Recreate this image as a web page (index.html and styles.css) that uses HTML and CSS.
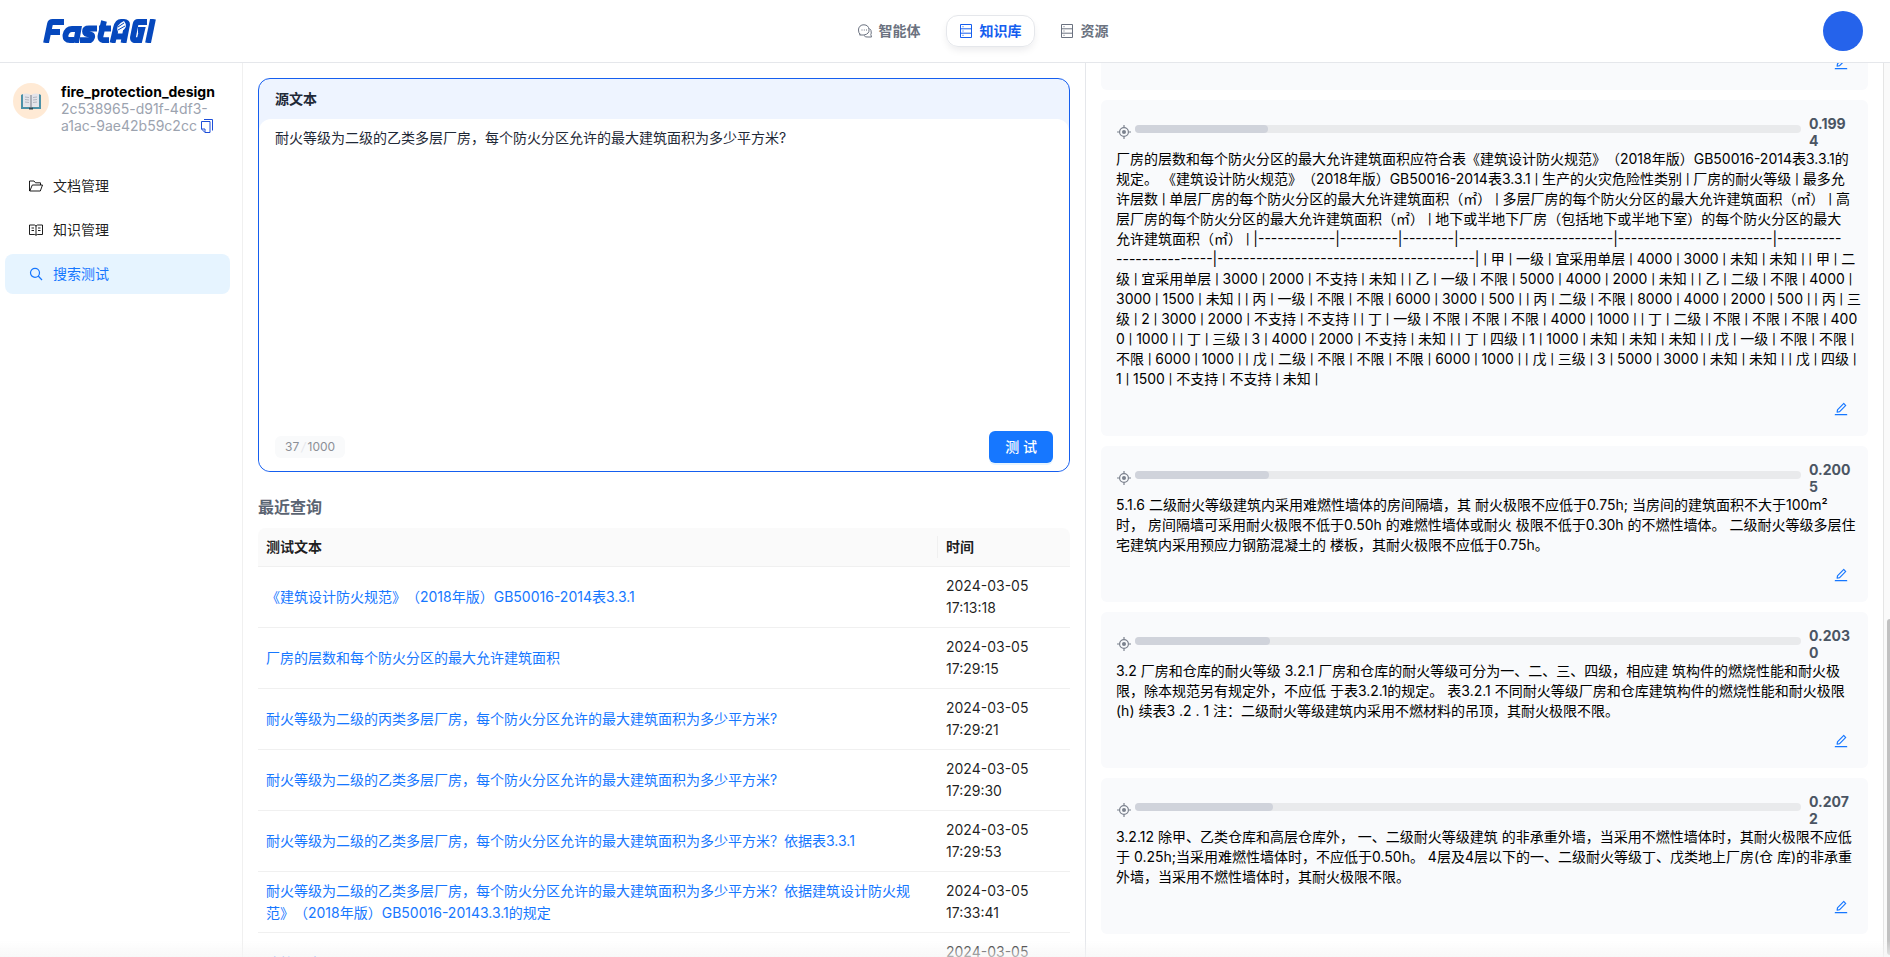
FILE: index.html
```html
<!DOCTYPE html>
<html lang="zh-CN">
<head>
<meta charset="utf-8">
<title>FastAGI 知识库</title>
<link rel="stylesheet" href="styles.css">
</head>
<body>
<svg class="defs" aria-hidden="true">
  <symbol id="edit" viewBox="0 0 1024 1024"><path d="M257.700 752c2 0 4-.2 6-.5L431.900 722c2-.4 3.900-1.300 5.300-2.800l423.900-423.900a9.960 9.960 0 000-14.100L694.900 114.900c-1.900-1.900-4.400-2.900-7.100-2.900s-5.200 1-7.100 2.900L256.800 538.800c-1.500 1.500-2.400 3.300-2.800 5.300l-29.500 168.200a33.500 33.500 0 009.400 29.800c6.600 6.400 14.900 9.900 23.800 9.900zm67.400-174.400L687.800 215l73.300 73.300-362.700 362.600-88.900 15.700 15.600-89zM880 836H144c-17.700 0-32 14.300-32 32v36c0 4.400 3.600 8 8 8h784c4.400 0 8-3.600 8-8v-36c0-17.700-14.300-32-32-32z"/></symbol>
  <symbol id="aim" viewBox="0 0 1024 1024"><circle cx="512" cy="512" r="282" fill="none" stroke="currentColor" stroke-width="76"/><circle cx="512" cy="512" r="130"/><path d="M474 64h76v160h-76zM474 800h76v160h-76zM64 474h160v76H64zM800 474h160v76H800z"/></symbol>
  <symbol id="rack" viewBox="0 0 14 16"><path d="M1.500 1.500h11v13h-11zM1.500 5.800h11M1.500 10.200h11M3.500 3.700h1M3.500 8h1M3.500 12.300h1" fill="none" stroke="currentColor"/></symbol>
</svg>

<header class="topbar">
  <a class="logo" href="#" aria-label="FastAGI">
    <svg viewBox="0 0 113 24" width="113" height="24" aria-hidden="true">
      <g fill="none" stroke="#0648bd" stroke-width="5.800">
        <path d="M3 24 7 5Q7.500 3 9.500 3H21M5 13H17"/>
        <path d="M33 24 35.500 10H29Q24 10 22.500 16 22 21 27 21H31"/>
        <path d="M54 9.500H46Q42 9.500 42 12.500T46 15.300 49 18.500 45 21.200H37"/>
        <path d="M61 2 57.500 17Q57 21.200 61 21.200H66M56 9.500H68"/>
        <path d="M69.500 24 73 9Q74.500 3 78 3H81Q84.500 3 84 6L80.500 24M71 17.500H81"/>
        <path d="M104 3H95Q93 3 92.500 5.500L90 18Q89.500 21.200 92 21.200H96.500L99 11H95"/>
        <path d="M110 0 105 24"/>
      </g>
      <path d="M75 13Q72 6 81 2 86 8 78 13Z" fill="#fff"/>
      <path d="M75 8 81 4M75 11 82 7" stroke="#0648bd"/>
    </svg>
  </a>
  <nav class="tabs">
    <a class="tab" href="#"><svg width="14" height="14" viewBox="0 0 14 14" fill="none" stroke="currentColor" aria-hidden="true"><path d="M2 10.300Q.5 8.700.5 6A5 5 0 0 1 6 .8Q10.500 1 11 5.500T6 11H1.500L2.500 9.800M11.500 4.500Q13.500 6 13.300 9L12.800 10.500 13.500 13H10Q7.500 13.500 6 11.500M3.500 6h1M5.800 6h1M8 6h1"/></svg>智能体</a>
    <a class="tab active" href="#"><svg width="14" height="16" aria-hidden="true"><use href="#rack"/></svg>知识库</a>
    <a class="tab" href="#"><svg width="14" height="16" aria-hidden="true"><use href="#rack"/></svg>资源</a>
  </nav>
  <button class="avatar" aria-label="用户菜单"></button>
</header>

<div class="page">
  <aside class="sidebar">
    <div class="dataset">
      <div class="book">
        <svg width="20" height="17" viewBox="0 0 20 17" aria-hidden="true"><path d="M0 2 2 1V14H18V1L20 2V16H0Z" fill="#4c91a8"/><path d="M2 1Q7-.5 10 2 13-.5 18 1V14Q13 12.500 10 15 7 12.500 2 14Z" fill="#e3e4ea"/><path d="M4 4 8 4.500M4 6.500 8 7M4 9 8 9.500M16 4 12 4.500M16 6.500 12 7M16 9 12 9.500" stroke="#b4b6bf"/><path d="M10 2V15" stroke="#777b84"/><path d="M8 14.500h4v2H8z" fill="#334b55"/></svg>
      </div>
      <div class="dataset-text">
        <h1>fire_protection_design</h1>
        <p>2c538965-d91f-4df3-<br>a1ac-9ae42b59c2cc <button class="copy" aria-label="复制"><svg width="12" height="14" viewBox="0 0 12 14" fill="none" stroke="currentColor" aria-hidden="true"><path d="M3 .5h8.500V11.500M.5 2.500h8.500v11H4L.5 10zM.5 10H4v3.500"/></svg></button></p>
      </div>
    </div>
    <nav class="menu">
      <a href="#"><svg width="14" height="14" viewBox="0 0 14 14" fill="none" stroke="currentColor" aria-hidden="true"><path d="M.5 12V2h4.500L6.500 3.800H11.500V6M.8 12 3.300 6H13.500L11.300 12Z"/></svg>文档管理</a>
      <a href="#"><svg width="14" height="14" viewBox="0 0 14 14" fill="none" stroke="currentColor" aria-hidden="true"><path d="M.5 2H5.500L7 3 8.500 2H13.500V11.500H8.500L7 12.300 5.500 11.500H.5ZM7 3V12M2.500 5H5M2.500 7.500H5M9 5H11.500M9 7.500H11.500"/></svg>知识管理</a>
      <a class="active" href="#"><svg width="14" height="14" viewBox="0 0 14 14" fill="none" stroke="currentColor" stroke-width="1.200" aria-hidden="true"><circle cx="6" cy="5.800" r="4.500"/><path d="M9.200 9 13 13"/></svg>搜索测试</a>
    </nav>
  </aside>

  <main class="query">
    <form class="source">
      <label class="source-title" for="source">源文本</label>
      <div class="source-body">
        <textarea id="source">耐火等级为二级的乙类多层厂房，每个防火分区允许的最大建筑面积为多少平方米?</textarea>
        <div class="source-foot">
          <span class="count">37<i>/</i>1000</span>
          <button class="primary" type="button">测 试</button>
        </div>
      </div>
    </form>
    <h2>最近查询</h2>
    <table class="recent">
      <thead><tr><th>测试文本</th><th class="time">时间</th></tr></thead>
      <tbody>
        <tr><td><a href="#">《建筑设计防火规范》（2018年版）GB50016-2014表3.3.1</a></td><td>2024-03-05 17:13:18</td></tr>
        <tr><td><a href="#">厂房的层数和每个防火分区的最大允许建筑面积</a></td><td>2024-03-05 17:29:15</td></tr>
        <tr><td><a href="#">耐火等级为二级的丙类多层厂房，每个防火分区允许的最大建筑面积为多少平方米?</a></td><td>2024-03-05 17:29:21</td></tr>
        <tr><td><a href="#">耐火等级为二级的乙类多层厂房，每个防火分区允许的最大建筑面积为多少平方米?</a></td><td>2024-03-05 17:29:30</td></tr>
        <tr><td><a href="#">耐火等级为二级的乙类多层厂房，每个防火分区允许的最大建筑面积为多少平方米？依据表3.3.1</a></td><td>2024-03-05 17:29:53</td></tr>
        <tr><td><a href="#">耐火等级为二级的乙类多层厂房，每个防火分区允许的最大建筑面积为多少平方米？依据建筑设计防火规范》（2018年版）GB50016-20143.3.1的规定</a></td><td>2024-03-05 17:33:41</td></tr>
        <tr><td><a href="#">建筑观点</a></td><td>2024-03-05 17:35:12</td></tr>
      </tbody>
    </table>
  </main>

  <section class="results">
    <article class="card previous">
      <button class="edit" aria-label="编辑"><svg width="16" height="16" aria-hidden="true"><use href="#edit"/></svg></button>
    </article>
    <article class="card">
      <div class="score"><svg width="16" height="16" aria-hidden="true"><use href="#aim"/></svg><div class="bar"><div class="fill" style="width:19.940%"></div></div><b>0.1994</b></div>
      <p>厂房的层数和每个防火分区的最大允许建筑面积应符合表《建筑设计防火规范》（2018年版）GB50016-2014表3.3.1的<br>规定。 《建筑设计防火规范》（2018年版）GB50016-2014表3.3.1 <i>|</i> 生产的火灾危险性类别 <i>|</i> 厂房的耐火等级 <i>|</i> 最多允<br>许层数 <i>|</i> 单层厂房的每个防火分区的最大允许建筑面积（㎡） <i>|</i> 多层厂房的每个防火分区的最大允许建筑面积（㎡） <i>|</i> 高<br>层厂房的每个防火分区的最大允许建筑面积（㎡） <i>|</i> 地下或半地下厂房（包括地下或半地下室）的每个防火分区的最大<br>允许建筑面积（㎡） <i>|</i> |------------|---------|--------|------------------------|------------------------|----------<br>---------------|----------------------------------------| <i>|</i> 甲 <i>|</i> 一级 <i>|</i> 宜采用单层 <i>|</i> 4000 <i>|</i> 3000 <i>|</i> 未知 <i>|</i> 未知 <i>|</i> <i>|</i> 甲 <i>|</i> 二<br>级 <i>|</i> 宜采用单层 <i>|</i> 3000 <i>|</i> 2000 <i>|</i> 不支持 <i>|</i> 未知 <i>|</i> <i>|</i> 乙 <i>|</i> 一级 <i>|</i> 不限 <i>|</i> 5000 <i>|</i> 4000 <i>|</i> 2000 <i>|</i> 未知 <i>|</i> <i>|</i> 乙 <i>|</i> 二级 <i>|</i> 不限 <i>|</i> 4000 <i>|</i><br>3000 <i>|</i> 1500 <i>|</i> 未知 <i>|</i> <i>|</i> 丙 <i>|</i> 一级 <i>|</i> 不限 <i>|</i> 不限 <i>|</i> 6000 <i>|</i> 3000 <i>|</i> 500 <i>|</i> <i>|</i> 丙 <i>|</i> 二级 <i>|</i> 不限 <i>|</i> 8000 <i>|</i> 4000 <i>|</i> 2000 <i>|</i> 500 <i>|</i> <i>|</i> 丙 <i>|</i> 三<br>级 <i>|</i> 2 <i>|</i> 3000 <i>|</i> 2000 <i>|</i> 不支持 <i>|</i> 不支持 <i>|</i> <i>|</i> 丁 <i>|</i> 一级 <i>|</i> 不限 <i>|</i> 不限 <i>|</i> 不限 <i>|</i> 4000 <i>|</i> 1000 <i>|</i> <i>|</i> 丁 <i>|</i> 二级 <i>|</i> 不限 <i>|</i> 不限 <i>|</i> 不限 <i>|</i> 400<br>0 <i>|</i> 1000 <i>|</i> <i>|</i> 丁 <i>|</i> 三级 <i>|</i> 3 <i>|</i> 4000 <i>|</i> 2000 <i>|</i> 不支持 <i>|</i> 未知 <i>|</i> <i>|</i> 丁 <i>|</i> 四级 <i>|</i> 1 <i>|</i> 1000 <i>|</i> 未知 <i>|</i> 未知 <i>|</i> 未知 <i>|</i> <i>|</i> 戊 <i>|</i> 一级 <i>|</i> 不限 <i>|</i> 不限 <i>|</i><br>不限 <i>|</i> 6000 <i>|</i> 1000 <i>|</i> <i>|</i> 戊 <i>|</i> 二级 <i>|</i> 不限 <i>|</i> 不限 <i>|</i> 不限 <i>|</i> 6000 <i>|</i> 1000 <i>|</i> <i>|</i> 戊 <i>|</i> 三级 <i>|</i> 3 <i>|</i> 5000 <i>|</i> 3000 <i>|</i> 未知 <i>|</i> 未知 <i>|</i> <i>|</i> 戊 <i>|</i> 四级 <i>|</i><br>1 <i>|</i> 1500 <i>|</i> 不支持 <i>|</i> 不支持 <i>|</i> 未知 <i>|</i></p>
      <button class="edit" aria-label="编辑"><svg width="16" height="16" aria-hidden="true"><use href="#edit"/></svg></button>
    </article>
    <article class="card">
      <div class="score"><svg width="16" height="16" aria-hidden="true"><use href="#aim"/></svg><div class="bar"><div class="fill" style="width:20.050%"></div></div><b>0.2005</b></div>
      <p>5.1.6 二级耐火等级建筑内采用难燃性墙体的房间隔墙，其 耐火极限不应低于0.75h; 当房间的建筑面积不大于100m²<br>时， 房间隔墙可采用耐火极限不低于0.50h 的难燃性墙体或耐火 极限不低于0.30h 的不燃性墙体。 二级耐火等级多层住<br>宅建筑内采用预应力钢筋混凝土的 楼板，其耐火极限不应低于0.75h。</p>
      <button class="edit" aria-label="编辑"><svg width="16" height="16" aria-hidden="true"><use href="#edit"/></svg></button>
    </article>
    <article class="card">
      <div class="score"><svg width="16" height="16" aria-hidden="true"><use href="#aim"/></svg><div class="bar"><div class="fill" style="width:20.300%"></div></div><b>0.2030</b></div>
      <p>3.2 厂房和仓库的耐火等级 3.2.1 厂房和仓库的耐火等级可分为一、二、三、四级，相应建 筑构件的燃烧性能和耐火极<br>限，除本规范另有规定外，不应低 于表3.2.1的规定。 表3.2.1 不同耐火等级厂房和仓库建筑构件的燃烧性能和耐火极限<br>(h) 续表3 .2 . 1 注：二级耐火等级建筑内采用不燃材料的吊顶，其耐火极限不限。</p>
      <button class="edit" aria-label="编辑"><svg width="16" height="16" aria-hidden="true"><use href="#edit"/></svg></button>
    </article>
    <article class="card">
      <div class="score"><svg width="16" height="16" aria-hidden="true"><use href="#aim"/></svg><div class="bar"><div class="fill" style="width:20.720%"></div></div><b>0.2072</b></div>
      <p>3.2.12 除甲、乙类仓库和高层仓库外， 一、二级耐火等级建筑 的非承重外墙，当采用不燃性墙体时，其耐火极限不应低<br>于 0.25h;当采用难燃性墙体时，不应低于0.50h。 4层及4层以下的一、二级耐火等级丁、戊类地上厂房(仓 库)的非承重<br>外墙，当采用不燃性墙体时，其耐火极限不限。</p>
      <button class="edit" aria-label="编辑"><svg width="16" height="16" aria-hidden="true"><use href="#edit"/></svg></button>
    </article>
  </section>
  <div class="scroll"><div class="thumb"></div></div>
</div>
<div class="fade"></div>
</body>
</html>
```
FILE: styles.css
```css
* { box-sizing: border-box; }

body {
  margin: 0;
  height: 100vh;
  display: flex;
  flex-direction: column;
  overflow: hidden;
  background: #fff;
  color: rgba(0, 0, 0, 0.88);
  font: 14px/22px Inter, "Noto Sans CJK SC", sans-serif;
  text-spacing-trim: space-all;
}

h1, h2, p { margin: 0; }
a { color: #1677ff; text-decoration: none; }
button { border: 0; padding: 0; background: none; font: inherit; cursor: pointer; }
svg { fill: currentColor; flex: none; }
svg[fill="none"] { fill: none; }
.defs { position: absolute; width: 0; height: 0; }

.topbar {
  flex: none;
  height: 63px;
  display: grid;
  grid-template-columns: 1fr auto 1fr;
  align-items: center;
  padding: 0 27px 0 43px;
  border-bottom: 1px solid #e5e7eb;
}
.logo { display: flex; }
.tabs { display: flex; gap: 12px; padding-left: 60px; }
.tab {
  display: flex;
  align-items: center;
  gap: 7px;
  height: 32px;
  padding: 0 12px;
  border: 1px solid transparent;
  border-radius: 12px;
  color: #6b7280;
  font-weight: 600;
}
.tab.active {
  color: #155eef;
  border-color: #e5e7eb;
  box-shadow: 0 4px 8px -2px rgba(16, 24, 40, 0.1);
}
.avatar {
  justify-self: end;
  width: 40px;
  height: 40px;
  border-radius: 50%;
  background: #2563eb;
}

.page {
  flex: 1;
  min-height: 0;
  display: grid;
  grid-template-columns: 243px 843fr 797fr 7px;
}

.sidebar { border-right: 1px solid #f0f0f0; }
.dataset { display: flex; gap: 12px; padding: 20px 8px 0 13px; }
.book {
  flex: none;
  width: 36px;
  height: 36px;
  border-radius: 50%;
  background: #ffead5;
  display: grid;
  place-items: center;
}
.dataset h1 { font-size: 14px; line-height: 17px; font-weight: 700; color: #000; }
.dataset p { line-height: 17px; color: #9ca3af; white-space: nowrap; }
.copy { color: #1d4ed8; vertical-align: -2px; line-height: 0; }
.menu { padding: 32px 12px 0 5px; display: grid; gap: 4px; }
.menu a {
  display: flex;
  align-items: center;
  gap: 10px;
  height: 40px;
  padding: 0 24px;
  border-radius: 8px;
  color: rgba(0, 0, 0, 0.88);
}
.menu .active { background: #e6f4ff; color: #1677ff; }

.query { padding: 15px 15px 0; border-right: 1px solid #e5e7eb; overflow: hidden; min-height: 0; }
.source { border: 1px solid #155eef; border-radius: 12px; background: #eef4ff; overflow: hidden; }
.source-title { display: block; padding: 9px 16px; font-weight: 600; color: #1f2937; }
.source-body { background: #fff; border-radius: 12px; }
.source textarea {
  display: block;
  width: 100%;
  height: 312px;
  padding: 8px 16px;
  border: 0;
  outline: 0;
  resize: none;
  background: none;
  color: #1f2937;
  font: inherit;
}
.source-foot { display: flex; justify-content: space-between; align-items: center; padding: 0 16px 8px; }
.count {
  padding: 0 10px;
  border-radius: 6px;
  background: #f9fafb;
  color: #8c8f96;
  font-size: 12px;
}
.count i { color: #e5e7eb; padding: 0 2px; }
.primary {
  height: 32px;
  padding: 0 16px;
  border-radius: 6px;
  background: #1677ff;
  color: #fff;
  font-weight: 500;
  box-shadow: 0 2px 0 rgba(5, 145, 255, 0.1);
}
.query h2 { margin: 24px 0 10px; font-size: 16px; line-height: 22px; font-weight: 600; color: #5b6472; }

.recent { width: 100%; border-collapse: separate; border-spacing: 0; table-layout: fixed; }
.recent th, .recent td { padding: 8px; text-align: left; border-bottom: 1px solid #f0f0f0; }
.recent th { background: #fafafa; font-weight: 600; }
.recent th:first-child {
  border-top-left-radius: 8px;
  background: linear-gradient(#f0f0f0, #f0f0f0) right center / 1px 22px no-repeat #fafafa;
}
.recent .time { width: 132px; border-top-right-radius: 8px; }
.recent td:last-child { padding-right: 40px; }

.results {
  display: flex;
  flex-direction: column;
  justify-content: flex-end;
  gap: 10px;
  padding: 0 15px 23px;
  overflow: hidden;
  min-height: 0;
}
.card {
  flex: none;
  display: flex;
  flex-direction: column;
  padding: 15px 15px 19px;
  border-radius: 6px;
  background: #f9fafc;
}
.card p { line-height: 20px; color: #000; white-space: nowrap; }
.card p i { font-family: Roboto, sans-serif; font-style: normal; }
.score { display: flex; height: 34px; }
.score svg { margin: 9px 3px 0 0; color: #7b818d; }
.bar { flex: 1; height: 8px; margin: 10px 8px 0 0; border-radius: 4px; background: #e9eaec; }
.fill { height: 8px; border-radius: 4px; background: #d0d3db; }
.score b { width: 44px; line-height: 17px; color: #4b5563; word-break: break-all; }
.edit { align-self: flex-end; margin: 12px 4px 0 0; height: 16px; color: #1677ff; line-height: 0; }

.scroll { display: flex; flex-direction: column; justify-content: flex-end; border-left: 1px solid #e5e5e5; background: #fafafa; padding: 0 0 2px 3px; }
.thumb { height: 37.7%; border-radius: 4px 0 0 4px; background: #c1c1c1; }

.fade {
  position: fixed;
  inset: auto 0 0 0;
  height: 17px;
  background: linear-gradient(rgba(245, 245, 245, 0), rgba(245, 245, 245, 0.7));
  pointer-events: none;
}
```
